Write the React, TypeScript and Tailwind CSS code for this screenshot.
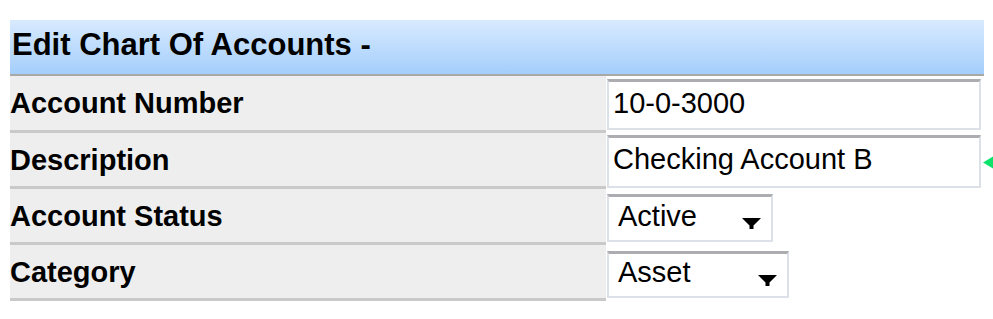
import React from "react";

const font = { fontFamily: '"Liberation Sans", Arial, sans-serif' };

function Arrow() {
    return (
        <svg width="19" height="11" viewBox="0 0 19 11" className="shrink-0">
            <polygon points="0,0 19,0 11.5,7.5 11.5,11 7.5,11 7.5,7.5" fill="#000" />
        </svg>
    );
}

function TextBox({ value, top, height, pad }: { value: string; top: string; height: string; pad: string }) {
    return (
        <div className={`pl-[1px] ${top}`}>
            <div
                className={`w-[374px] ${height} ${pad} bg-white border-x-2 border-b-2 border-t-[3px] border-[#dce0e7] border-t-[#adadb1] pl-[4px] text-[29px] leading-none text-black`}
            >
                {value}
            </div>
        </div>
    );
}

function SelectBox({ value, top, width, height, textPad }: { value: string; top: string; width: string; height: string; textPad: string }) {
    return (
        <div className={`pl-[1px] ${top}`}>
            <div
                className={`flex ${width} ${height} bg-white border-x-2 border-b-2 border-t-[3px] border-[#dce0e7] border-t-[#adadb1] pl-[9px] pr-[10px] text-[29px] leading-none text-black`}
            >
                <span className={textPad}>{value}</span>
                <span className="ml-auto mt-[21px]">
                    <Arrow />
                </span>
            </div>
        </div>
    );
}

export default function App() {
    return (
        <div className="w-[993px] h-[319px] bg-white pt-[20px] pl-[10px] overflow-hidden" style={font}>
            <div className="w-[974px]">
                {/* Title bar */}
                <div className="h-[56px] border-b-2 border-[#a8a8a8] bg-gradient-to-b from-[#d8eafe] to-[#a4cefb] pl-[2px] pt-[9px]">
                    <h1 className="text-[31px] leading-none font-bold text-black">Edit Chart Of Accounts -</h1>
                </div>

                {/* Form rows */}
                <div className="grid grid-cols-[596px_378px]">
                    <div className="h-[57px] bg-[#eeeeee] border-b-[3px] border-[#c9c9c9] pt-[13px] text-[29px] leading-none font-bold text-black">
                        Account Number
                    </div>
                    <TextBox value="10-0-3000" top="pt-[3px]" height="h-[51px]" pad="pt-[7px]" />

                    <div className="h-[56px] bg-[#eeeeee] border-b-[3px] border-[#c9c9c9] pt-[13px] text-[29px] leading-none font-bold text-black">
                        Description
                    </div>
                    <div className="relative">
                        <TextBox value="Checking Account B" top="pt-[2px]" height="h-[53px]" pad="pt-[7px]" />
                        <svg width="11" height="13" viewBox="0 0 11 13" className="absolute left-[377px] top-[23px]">
                            <polygon points="0,6.5 11,0 11,13" fill="#0de36a" />
                        </svg>
                    </div>

                    <div className="h-[56px] bg-[#eeeeee] border-b-[3px] border-[#c9c9c9] pt-[13px] text-[29px] leading-none font-bold text-black">
                        Account Status
                    </div>
                    <SelectBox value="Active" top="pt-[5px]" width="w-[166px]" height="h-[48px]" textPad="mt-[5px]" />

                    <div className="h-[56px] bg-[#eeeeee] border-b-[3px] border-[#c9c9c9] pt-[13px] text-[29px] leading-none font-bold text-black">
                        Category
                    </div>
                    <SelectBox value="Asset" top="pt-[6px]" width="w-[182px]" height="h-[47px]" textPad="mt-[4px]" />
                </div>
            </div>
        </div>
    );
}
